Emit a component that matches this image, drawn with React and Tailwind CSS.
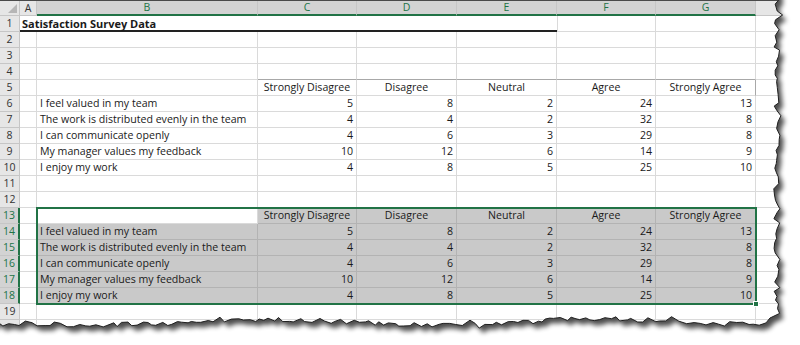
import React from "react"

const font = { fontFamily: '"Open Sans", "Liberation Sans", sans-serif' }

const cols = ["A", "B", "C", "D", "E", "F", "G", ""]
const heads = ["Strongly Disagree", "Disagree", "Neutral", "Agree", "Strongly Agree"]
const items = [
  ["I feel valued in my team", 5, 8, 2, 24, 13],
  ["The work is distributed evenly in the team", 4, 4, 2, 32, 8],
  ["I can communicate openly", 4, 6, 3, 29, 8],
  ["My manager values my feedback", 10, 12, 6, 14, 9],
  ["I enjoy my work", 4, 8, 5, 25, 10],
]

// build the sheet content row by row
const buildRows = () => {
  const rows = []
  for (let r = 1; r <= 20; r++) {
    const cells = ["", "", "", "", "", "", "", ""]
    let kind = "plain"
    if (r === 1) kind = "title"
    if (r === 5 || r === 13) {
      heads.forEach((h, i) => (cells[2 + i] = h))
      kind = r === 5 ? "head" : "shead"
    }
    if (r >= 6 && r <= 10) {
      items[r - 6].forEach((v, i) => (cells[1 + i] = v))
      kind = "data"
    }
    if (r >= 14 && r <= 18) {
      items[r - 14].forEach((v, i) => (cells[1 + i] = v))
      kind = "sdata"
    }
    rows.push({ r, cells, kind })
  }
  return rows
}

const rand = (seed) => () => {
  seed = (seed * 16807) % 2147483647
  return (seed - 1) / 2147483646
}

const tornEdge = () => {
  const rnd = rand(42)
  const pts = []
  for (let y = 0; y <= 314; y += 3 + rnd() * 4) {
    const spike = rnd() < 0.15 ? (rnd() - 0.5) * 10 : 0
    pts.push([777 + (rnd() - 0.5) * 6 + spike, y])
  }
  pts.push([770, 318])
  for (let x = 766; x >= -10; x -= 3 + rnd() * 5) {
    const spike = rnd() < 0.15 ? (rnd() - 0.5) * 9 : 0
    const base = 322 + Math.sin(x / 55) * 3
    pts.push([x, base + (rnd() - 0.5) * 5 + spike])
  }
  return pts
}

const TornPaper = () => {
  const pts = tornEdge()
  const line = "M" + pts.map((p) => `${p[0].toFixed(1)} ${p[1].toFixed(1)}`).join(" L")
  const paper = `M-20 -20 L${pts[0][0].toFixed(1)} -20 ` + line.replace("M", "L") + " L-20 330 Z"
  const outside = `M0 0H800V345H0Z ${paper}`
  return (
    <svg className="absolute inset-0 pointer-events-none" width="800" height="345">
      <defs>
        <clipPath id="out">
          <path d={outside} clipRule="evenodd" />
        </clipPath>
        <filter id="blur" x="-10%" y="-10%" width="120%" height="120%">
          <feGaussianBlur stdDeviation="2.4" />
        </filter>
      </defs>
      <path d={outside} fill="#ffffff" fillRule="evenodd" />
      <g clipPath="url(#out)">
        <path d={paper} transform="translate(4,5)" fill="#000" opacity="0.7" filter="url(#blur)" />
      </g>
      <path d={line} fill="none" stroke="#1f1f1f" strokeWidth="1" />
    </svg>
  )
}

const grid = "grid grid-cols-[20px_17px_221px_99px_100px_100px_99px_100px_1fr]"

export default function App() {
  const rows = buildRows()
  return (
    <div className="relative w-[800px] h-[345px] overflow-hidden bg-white text-[10.6px] text-[#1a1a1a]" style={font}>
      {/* column headers */}
      <div className={`${grid} h-4 bg-[#e6e6e6] border-t border-t-[#4a4a4a]`}>
        <div className="relative border-r border-b border-[#c6c6c6]">
          <svg className="absolute right-[2px] bottom-[2px]" width="9" height="9">
            <polygon points="9,0 9,9 0,9" fill="#b6b6b6" />
          </svg>
        </div>
        {cols.map((c, i) => {
          const sel = i >= 1 && i <= 6
          return (
            <div
              key={i}
              className={`flex items-center justify-center text-[10.5px] leading-none border-r border-[#c6c6c6] ${
                sel ? "bg-[#d3d3d3] text-[#217346] border-b-2 border-b-[#217346]" : "text-[#333] border-b border-b-[#c6c6c6]"
              }`}
            >
              {c}
            </div>
          )
        })}
      </div>

      {rows.map(({ r, cells, kind }) => {
        const selRow = r >= 13 && r <= 18
        return (
          <div key={r} className={`${grid} h-4`}>
            <div
              className={`flex items-center justify-center text-[10.5px] leading-none border-b border-[#c6c6c6] ${
                selRow
                  ? "bg-[#d3d3d3] text-[#217346] border-r-2 border-r-[#217346]"
                  : "bg-[#e6e6e6] text-[#333] border-r border-r-[#c6c6c6]"
              }`}
            >
              {r < 20 ? r : ""}
            </div>
            {kind === "title" ? (
              <>
                <div className="col-span-5 flex items-center px-[2px] whitespace-nowrap leading-none font-bold text-[11px] border-b-2 border-b-[#222]">
                  Satisfaction Survey Data
                </div>
                <div className="border-r border-b border-[#dadada] border-l" />
                <div className="border-r border-b border-[#dadada]" />
                <div className="border-r border-b border-[#dadada]" />
              </>
            ) : (
              cells.map((v, i) => {
                const gray = (kind === "shead" && i >= 2 && i <= 6) || (kind === "sdata" && i >= 1 && i <= 6)
                const num = typeof v === "number"
                const headBorder = r === 4 && i >= 2 && i <= 6
                const rightEdge = r === 5 && i === 6
                return (
                  <div
                    key={i}
                    className={`flex items-center px-[3px] whitespace-nowrap leading-none border-r ${
                      gray ? "bg-[#c9c9c9] border-[#b3b3b3]" : "border-[#dadada]"
                    } ${rightEdge ? "border-r-[#a8a8a8]" : ""} ${
                      headBorder ? "border-b border-b-[#a8a8a8]" : gray ? "border-b border-b-[#b3b3b3]" : "border-b border-b-[#dadada]"
                    } ${num ? "justify-end" : kind === "head" || kind === "shead" ? "justify-center" : "justify-start"}`}
                  >
                    {v}
                  </div>
                )
              })
            )}
          </div>
        )
      })}

      {/* selection B13:G18 */}
      <div className="absolute left-[36px] top-[207px] w-[721px] h-[98px] border-2 border-[#217346] pointer-events-none" />
      <div className="absolute left-[753px] top-[301px] w-[6px] h-[6px] bg-[#217346] border border-white pointer-events-none" />

      <TornPaper />
    </div>
  )
}
